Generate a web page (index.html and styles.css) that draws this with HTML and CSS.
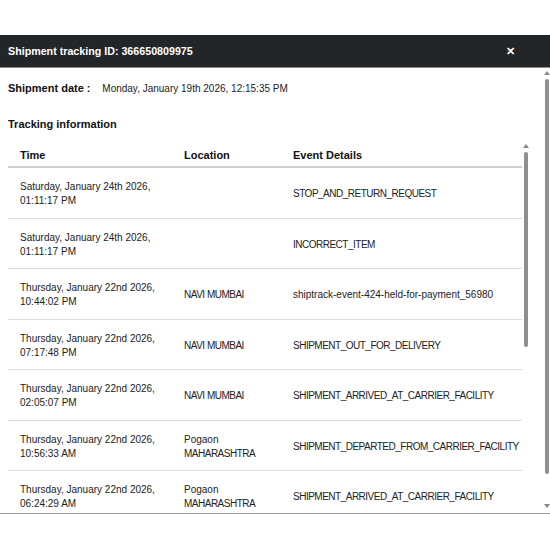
FILE: index.html
```html
<!DOCTYPE html>
<html lang="en">
<head>
    <meta charset="UTF-8">
    <meta name="viewport" content="width=device-width, initial-scale=1.0">
    <title>Shipment tracking</title>
    <link rel="stylesheet" href="styles.css">
</head>
<body>
    <div class="topSpace"></div>
    <div class="modal">
        <div class="modalHeader">
            <span class="modalTitle">Shipment tracking ID: 366650809975</span>
            <span class="modalClose">&#x2715;</span>
        </div>
        <div class="modalBodyWrap">
            <div class="modalBody">
                <div class="shipDate">
                    <span class="shipDateLabel">Shipment date :</span>
                    <span>Monday, January 19th 2026, 12:15:35 PM</span>
                </div>
                <h3 class="sectionTitle">Tracking information</h3>
                <div class="tableWrap">
                    <table class="trackTable">
                        <colgroup>
                            <col class="colTime">
                            <col class="colLocation">
                            <col class="colEvent">
                        </colgroup>
                        <thead>
                            <tr>
                                <th>Time</th>
                                <th>Location</th>
                                <th>Event Details</th>
                            </tr>
                        </thead>
                        <tbody>
                            <tr>
                                <td>Saturday, January 24th 2026,<br>01:11:17 PM</td>
                                <td></td>
                                <td class="caps">STOP_AND_RETURN_REQUEST</td>
                            </tr>
                            <tr>
                                <td>Saturday, January 24th 2026,<br>01:11:17 PM</td>
                                <td></td>
                                <td class="caps">INCORRECT_ITEM</td>
                            </tr>
                            <tr>
                                <td>Thursday, January 22nd 2026,<br>10:44:02 PM</td>
                                <td class="caps">NAVI MUMBAI</td>
                                <td>shiptrack-event-424-held-for-payment_56980</td>
                            </tr>
                            <tr>
                                <td>Thursday, January 22nd 2026,<br>07:17:48 PM</td>
                                <td class="caps">NAVI MUMBAI</td>
                                <td class="caps">SHIPMENT_OUT_FOR_DELIVERY</td>
                            </tr>
                            <tr>
                                <td>Thursday, January 22nd 2026,<br>02:05:07 PM</td>
                                <td class="caps">NAVI MUMBAI</td>
                                <td class="caps">SHIPMENT_ARRIVED_AT_CARRIER_FACILITY</td>
                            </tr>
                            <tr>
                                <td>Thursday, January 22nd 2026,<br>10:56:33 AM</td>
                                <td>Pogaon<br><span class="caps">MAHARASHTRA</span></td>
                                <td class="caps">SHIPMENT_DEPARTED_FROM_CARRIER_FACILITY</td>
                            </tr>
                            <tr>
                                <td>Thursday, January 22nd 2026,<br>06:24:29 AM</td>
                                <td>Pogaon<br><span class="caps">MAHARASHTRA</span></td>
                                <td class="caps">SHIPMENT_ARRIVED_AT_CARRIER_FACILITY</td>
                            </tr>
                        </tbody>
                    </table>
                    <div class="scrollBar innerBar">
                        <div class="arrowUp"></div>
                        <div class="thumb innerThumb"></div>
                    </div>
                </div>
            </div>
            <div class="scrollBar outerBar">
                <div class="arrowUp"></div>
                <div class="thumb outerThumb"></div>
                <div class="arrowDown"></div>
            </div>
        </div>
    </div>
</body>
</html>
```

FILE: styles.css
```css
body {
    margin: 0;
    background-color: #ffffff;
    font-family: "Liberation Sans", Arial, sans-serif;
    color: #222222;
}
.topSpace {
    height: 35px;
}
.modalHeader {
    height: 32px;
    background-color: #232629;
    color: #ffffff;
    display: flex;
    align-items: center;
    justify-content: space-between;
    padding: 0 35px 0 8px;
    border-bottom: 1px solid #8c8c8c;
}
.modalTitle {
    font-size: 10.7px;
    font-weight: bold;
}
.modalClose {
    font-size: 11px;
    font-weight: bold;
}
.modalBodyWrap {
    display: flex;
    height: 445px;
    border-bottom: 1px solid #9a9a9a;
    overflow: hidden;
}
.modalBody {
    flex: 1;
    padding: 12px 14px 0 8px;
    overflow: hidden;
}
.shipDate {
    font-size: 10px;
    line-height: 16px;
}
.shipDateLabel {
    font-size: 11px;
    font-weight: bold;
    color: #111111;
    margin-right: 9px;
}
.sectionTitle {
    margin: 19px 0 8px 0;
    font-size: 11px;
    line-height: 16px;
    color: #111111;
}
.tableWrap {
    display: flex;
    align-items: flex-start;
}
.trackTable {
    width: 514px;
    flex: none;
    border-collapse: collapse;
    table-layout: fixed;
    font-size: 10px;
    line-height: 14px;
}
.colTime {
    width: 164px;
}
.colLocation {
    width: 109px;
}
.colEvent {
    width: 241px;
}
.trackTable th {
    text-align: left;
    font-size: 11px;
    color: #111111;
    padding: 8px 12px 4px 12px;
    border-bottom: 2px solid #cfcfcf;
}
.trackTable td {
    padding: 12px 12px 9.5px 12px;
    vertical-align: middle;
    border-bottom: 1px solid #dcdcdc;
    white-space: nowrap;
    overflow: hidden;
}
.caps {
    letter-spacing: -0.5px;
}
.scrollBar {
    display: flex;
    flex-direction: column;
    align-items: center;
}
.innerBar {
    width: 8px;
    padding-top: 4px;
}
.outerBar {
    width: 6px;
    padding-top: 3px;
}
.arrowUp {
    width: 0;
    height: 0;
    border-left: 3px solid transparent;
    border-right: 3px solid transparent;
    border-bottom: 4px solid #8a8a8a;
}
.arrowDown {
    width: 0;
    height: 0;
    margin-top: 30px;
    border-left: 3px solid transparent;
    border-right: 3px solid transparent;
    border-top: 4px solid #8a8a8a;
}
.thumb {
    width: 4px;
    border-radius: 3px;
    background-color: #8f8f8f;
}
.innerThumb {
    margin-top: 4px;
    height: 195px;
}
.outerThumb {
    margin-top: 4px;
    height: 395px;
}
```
